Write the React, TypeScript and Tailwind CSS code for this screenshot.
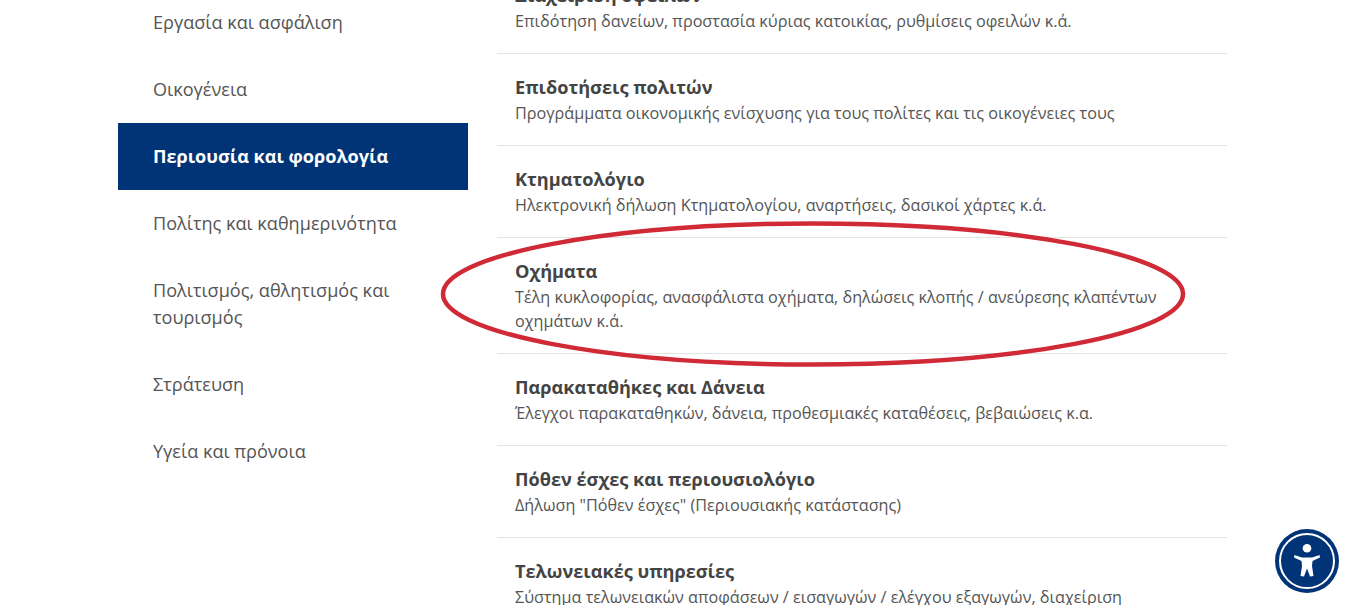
const sections = [
  { label: 'Εργασία και ασφάλιση' },
  { label: 'Οικογένεια' },
  { label: 'Περιουσία και φορολογία', active: true },
  { label: 'Πολίτης και καθημερινότητα' },
  { label: 'Πολιτισμός, αθλητισμός και τουρισμός' },
  { label: 'Στράτευση' },
  { label: 'Υγεία και πρόνοια' },
]

const services = [
  { title: 'Διαχείριση οφειλών', text: 'Επιδότηση δανείων, προστασία κύριας κατοικίας, ρυθμίσεις οφειλών κ.ά.' },
  { title: 'Επιδοτήσεις πολιτών', text: 'Προγράμματα οικονομικής ενίσχυσης για τους πολίτες και τις οικογένειες τους' },
  { title: 'Κτηματολόγιο', text: 'Ηλεκτρονική δήλωση Κτηματολογίου, αναρτήσεις, δασικοί χάρτες κ.ά.' },
  { title: 'Οχήματα', text: 'Τέλη κυκλοφορίας, ανασφάλιστα οχήματα, δηλώσεις κλοπής / ανεύρεσης κλαπέντων οχημάτων κ.ά.' },
  { title: 'Παρακαταθήκες και Δάνεια', text: 'Έλεγχοι παρακαταθηκών, δάνεια, προθεσμιακές καταθέσεις, βεβαιώσεις κ.α.' },
  { title: 'Πόθεν έσχες και περιουσιολόγιο', text: 'Δήλωση "Πόθεν έσχες" (Περιουσιακής κατάστασης)' },
  { title: 'Τελωνειακές υπηρεσίες', text: 'Σύστημα τελωνειακών αποφάσεων / εισαγωγών / ελέγχου εξαγωγών, διαχείριση' },
]

function App() {
  return (
    <div className="relative h-[605px] overflow-hidden bg-white font-['Open_Sans',sans-serif] text-[#555]">
      <div className="flex items-start pl-[118px]">
        {/* Left menu */}
        <nav className="mt-[-11px] w-[350px] shrink-0">
          {sections.map((s) => (
            <div
              key={s.label}
              className={
                s.active
                  ? 'bg-[#003476] px-[35px] py-5 text-[18.1px] leading-[27px] font-bold text-white'
                  : 'px-[35px] py-5 text-[18.1px] leading-[27px]'
              }
            >
              {s.label}
            </div>
          ))}
        </nav>

        {/* Service list */}
        <div className="mt-[-38px] ml-[29px] w-[730px] shrink-0">
          {services.map((s) => (
            <div key={s.title} className="border-b border-[#e4e4e4] px-[18px] py-5">
              <div className="text-[18.15px] leading-[27px] font-bold text-[#444]">{s.title}</div>
              <div className="text-[16.2px] leading-6">{s.text}</div>
            </div>
          ))}
        </div>
      </div>

      {/* Hand drawn highlight */}
      <svg className="absolute top-[218px] left-[438px]" width="752" height="154" viewBox="0 0 752 154" fill="none">
        <ellipse cx="375" cy="76" rx="370" ry="70.5" stroke="#cf2a35" strokeWidth="4.5" />
      </svg>

      {/* Accessibility button */}
      <button className="absolute top-[529px] left-[1275px] size-16 rounded-full bg-[#003476]">
        <svg width="64" height="64" viewBox="0 0 64 64" fill="none">
          <circle cx="32" cy="32" r="27" stroke="white" strokeWidth="2" />
          <circle cx="32" cy="19.3" r="4.3" fill="white" />
          <path
            d="M19.5 26 L27 28.5 H37 L44.5 26 L45 28.5 L37.5 32 L37 37 L38.5 47 L35 47.5 L32 39.5 L29 47.5 L25.5 47 L27 37 L26.5 32 L19 28.5 Z"
            fill="white"
          />
        </svg>
      </button>
    </div>
  )
}

export default App
